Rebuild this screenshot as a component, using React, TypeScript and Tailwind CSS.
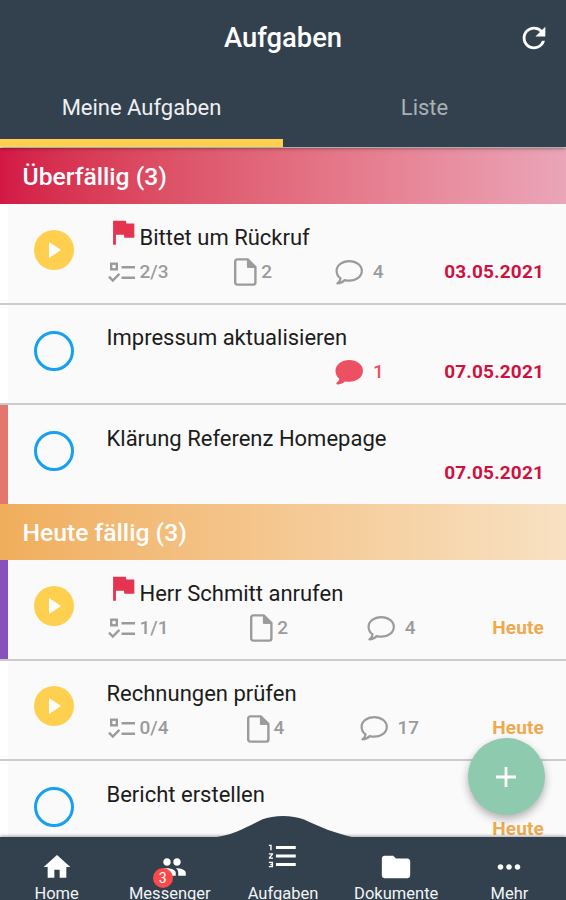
import type { ReactNode } from "react";
import { MdFlag, MdFolder, MdFormatListNumbered, MdHome, MdMoreHoriz, MdPeople, MdRefresh } from "react-icons/md";

type Task = {
    title: string;
    running?: boolean;
    flagged?: boolean;
    stripe?: string;
    checklist?: string;
    files?: number;
    comments?: number;
    unread?: boolean;
    due: string;
};

const overdue: Task[] = [
    { title: "Bittet um Rückruf", running: true, flagged: true, checklist: "2/3", files: 2, comments: 4, due: "03.05.2021" },
    { title: "Impressum aktualisieren", comments: 1, unread: true, due: "07.05.2021" },
    { title: "Klärung Referenz Homepage", stripe: "bg-[#e5766c]", due: "07.05.2021" },
];

const today: Task[] = [
    { title: "Herr Schmitt anrufen", running: true, flagged: true, stripe: "bg-[#8653bd]", checklist: "1/1", files: 2, comments: 4, due: "Heute" },
    { title: "Rechnungen prüfen", running: true, checklist: "0/4", files: 4, comments: 17, due: "Heute" },
    { title: "Bericht erstellen", due: "Heute" },
];

function ChecklistIcon() {
    return (
        <svg width="27" height="21" viewBox="0 0 27 21" fill="none" stroke="currentColor" strokeWidth="2.4">
            <rect x="3.2" y="1.7" width="5.6" height="5.6" />
            <path d="M13.5 5.2H27M13.5 15.7H27" />
            <path d="M1 14.7l3.8 3.8 6.6-6.6" />
        </svg>
    );
}

function FileIcon() {
    return (
        <svg width="23" height="28" viewBox="0 0 23 28" fill="none" stroke="currentColor" strokeWidth="2.4">
            <path d="M3.2 1.4h10.6l7.6 7.6v15.6a2 2 0 0 1-2 2H3.2a2 2 0 0 1-2-2V3.4a2 2 0 0 1 2-2z" />
            <path d="M13.4 1.4v8h8z" fill="currentColor" strokeWidth="1" />
        </svg>
    );
}

function CommentIcon({ filled }: { filled?: boolean }) {
    return (
        <svg width="28" height="25" viewBox="0 0 28 25" fill={filled ? "currentColor" : "none"} stroke="currentColor" strokeWidth="2.2" strokeLinejoin="round">
            <path d="M14.2 1.2C7.2 1.2 1.6 5.4 1.6 10.9c0 3.1 1.5 5.6 4 7.4-.3 1.9-1.4 3.6-3.2 5 2.8-.1 5.5-1.3 7.4-3.2 1.4.4 2.900.6 4.400.6 7 0 12.600-4.200 12.600-9.800S21.200 1.200 14.200 1.200z" />
        </svg>
    );
}

function SectionHeader({ title, color }: { title: string; color: string }) {
    return (
        <h2 className={`flex h-[56px] items-center pt-px pl-[22.5px] text-[24.7px] font-medium text-white ${color}`}>
            {title}
        </h2>
    );
}

function TaskRow({ task, dueColor, last }: { task: Task; dueColor: string; last?: boolean }) {
    return (
        <div className={`flex ${last ? "h-[99px]" : "h-[100.5px] border-b-2 border-[#cbcbcb]"}`}>
            <div className={`w-[7.5px] shrink-0 ${task.stripe ?? "bg-white"}`} />
            <div className="flex flex-1 bg-[#fafafa] pr-[22px] pl-[26px]">
                {task.running ? (
                    <div className="mt-[25.5px] flex size-10 shrink-0 items-center justify-center rounded-full bg-[#ffd04f]">
                        <svg width="12" height="16" viewBox="0 0 12 16" className="ml-[3px]">
                            <path d="M0 0l12 8L0 16z" fill="white" />
                        </svg>
                    </div>
                ) : (
                    <div className="mt-[26px] size-10 shrink-0 rounded-full border-[3.5px] border-[#16a0ee]" />
                )}
                <div className="ml-[33px] flex flex-1 flex-col pt-[18px]">
                    <div className="flex h-[30px] items-center whitespace-nowrap text-[22px] text-[#1c1c1c]">
                        {task.flagged && <MdFlag className="mt-[-10px] ml-[-1px] size-[34px] text-[#e5344f]" />}
                        {task.title}
                    </div>
                    <div className="mt-[5px] flex h-[30px] items-center justify-between text-[19px] font-medium text-[#9b9b9b]">
                        {task.checklist && (
                            <span className="flex items-center gap-[5px] pr-[5px] pl-px"><ChecklistIcon />{task.checklist}</span>
                        )}
                        {task.files && (
                            <span className="flex items-center gap-1 pr-[2px]"><FileIcon />{task.files}</span>
                        )}
                        {task.comments && (
                            <span className={`flex items-center gap-[10px] ${task.unread ? "mr-[60.5px] ml-auto text-[#ee5063]" : ""}`}>
                                <CommentIcon filled={task.unread} />{task.comments}
                            </span>
                        )}
                        <span className={`font-bold tracking-[0.15px] ${task.comments ? "" : "ml-auto"} ${dueColor}`}>{task.due}</span>
                    </div>
                </div>
            </div>
        </div>
    );
}

function NavItem({ icon, label, raised }: { icon: ReactNode; label: string; raised?: boolean }) {
    return (
        <a className="flex flex-1 flex-col items-center text-[16.5px] text-[#f2f4f6]">
            <span className={`relative flex h-[30px] shrink-0 items-center text-white ${raised ? "mt-[4px] mb-[11px]" : "mt-[15px]"}`}>{icon}</span>
            <span className="leading-[23px]">{label}</span>
        </a>
    );
}

export default function App() {
    return (
        <main className="relative flex h-[900px] w-[566px] flex-col overflow-hidden bg-[#fafafa] font-['Roboto',sans-serif]">
            <header className="relative z-10 flex h-[147px] shrink-0 flex-col bg-[#33414e] text-white shadow-[0_1px_4px_rgba(0,0,0,0.5)]">
                <div className="grid h-[77px] grid-cols-[1fr_auto_1fr] items-center">
                    <h1 className="col-start-2 text-[27.4px] font-medium">Aufgaben</h1>
                    <MdRefresh className="mt-[-2px] mr-[15.5px] size-[34px] justify-self-end" />
                </div>
                <nav className="flex flex-1 text-[22px]">
                    <button className="flex-1 border-b-8 border-[#ffd04f] pb-[2px] text-[#eef0f2]">Meine Aufgaben</button>
                    <button className="flex-1 border-b-8 border-transparent pb-[2px] text-[#a9b0b6]">Liste</button>
                </nav>
            </header>

            <section className="flex-1 overflow-hidden pt-px">
                <SectionHeader title="Überfällig (3)" color="bg-linear-to-r from-[#d31745] to-[#eaa5b8]" />
                {overdue.map((task, i) => (
                    <TaskRow key={task.title} task={task} dueColor="text-[#d0103f]" last={i === overdue.length - 1} />
                ))}
                <SectionHeader title="Heute fällig (3)" color="bg-linear-to-r from-[#f0ae5c] to-[#f8e1c2]" />
                {today.map((task) => (
                    <TaskRow key={task.title} task={task} dueColor="text-[#efa94f]" />
                ))}
            </section>

            <button className="absolute top-[738px] left-[467.5px] flex size-[77px] items-center justify-center rounded-full bg-[#8ecaae] shadow-[0_4px_8px_rgba(0,0,0,0.3)]">
                <svg width="20" height="20" viewBox="0 0 20 20" stroke="white" strokeWidth="2.8">
                    <path d="M10 0v20M0 10h20" />
                </svg>
            </button>

            <footer className="relative flex h-[63px] shrink-0 bg-[#33414e] shadow-[0_-1px_3px_rgba(0,0,0,0.35)]">
                <svg width="146" height="24" viewBox="0 0 146 24" className="absolute top-[-22px] left-[210px]">
                    <path d="M2 22.5C22 21 38 11 52 4.5C64-.2 82-.2 94 4.5C110 12 124 18 144 22.5V24H2z" fill="#33414e" />
                </svg>
                <NavItem icon={<MdHome className="size-[32px]" />} label="Home" />
                <NavItem
                    icon={
                        <>
                            <MdPeople className="ml-[4px] size-[30px]" />
                            <span className="absolute top-[16px] left-0 flex size-[20px] items-center justify-center rounded-full bg-[#f94b4b] text-[14px]">3</span>
                        </>
                    }
                    label="Messenger"
                />
                <NavItem icon={<MdFormatListNumbered className="size-[34px]" />} label="Aufgaben" raised />
                <NavItem icon={<MdFolder className="size-[34px]" />} label="Dokumente" />
                <NavItem icon={<MdMoreHoriz className="size-[34px]" />} label="Mehr" />
            </footer>
        </main>
    );
}
